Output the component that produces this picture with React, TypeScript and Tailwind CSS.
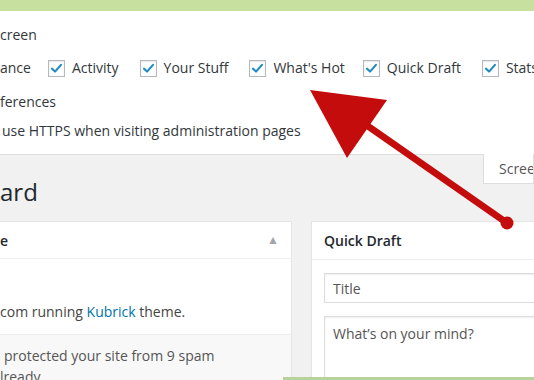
import React from 'react';

const Check = () => (
  <span className="inline-flex h-[17px] w-[17px] shrink-0 items-center justify-center border border-[#b4b9be] bg-white shadow-[inset_0_1px_2px_rgba(0,0,0,0.1)]">
    <svg width="13" height="13" viewBox="0 0 16 16">
      <path d="M2.5 8.2 L6.2 11.8 L13.5 3.5" fill="none" stroke="#1e8cbe" strokeWidth="2.6" strokeLinecap="round" strokeLinejoin="round" />
    </svg>
  </span>
);

const boxes = [
  { label: 'Activity', gap: 'ml-[17px]' },
  { label: 'Your Stuff', gap: 'ml-[21px]' },
  { label: "What's Hot", gap: 'ml-[21px]' },
  { label: 'Quick Draft', gap: 'ml-[18px]' },
  { label: 'Stats', gap: 'ml-[21px]' },
];

export default function App() {
  return (
    <div className="relative h-[380px] w-[534px] overflow-hidden bg-[#f1f1f1] font-['Open_Sans',sans-serif] text-[14px] text-[#32373c]">
      <div className="h-[11px] bg-[#c7df9f]" />

      {/* Screen options panel */}
      <div className="h-[144px] border-b border-[#dedede] bg-white">
        <div className="pt-[14px] leading-[20px]">creen</div>
        <div className="mt-[13px] flex items-center whitespace-nowrap leading-[20px]">
          <span>ance</span>
          {boxes.map((b) => (
            <label key={b.label} className={`${b.gap} flex items-center gap-[7px]`}>
              <Check />
              <span>{b.label}</span>
            </label>
          ))}
        </div>
        <div className="mt-[14px] leading-[20px]">ferences</div>
        <div className="mt-[9px] pl-[2px] leading-[20px]">use HTTPS when visiting administration pages</div>
      </div>

      {/* Screen options tab */}
      <div className="flex justify-end">
        <div className="-mt-px flex h-[30px] w-[51px] items-center overflow-hidden whitespace-nowrap border-x border-b border-[#dedede] bg-white pl-[15px] text-[14px] text-[#555]">
          Scree
        </div>
      </div>

      <h1 className="-mt-[9px] text-[24px] leading-[34px] font-normal text-[#23282d]">ard</h1>

      {/* Postboxes */}
      <div className="mt-[12px] flex gap-[19px]">
        <div className="w-[292px] shrink-0 border-t border-r border-[#e5e5e5] bg-white">
          <div className="flex h-[37px] items-center justify-between border-b border-[#eeeeee] pr-[12px] font-semibold text-[#23282d]">
            <span>e</span>
            <span className="text-[12px] text-[#a0a5aa]">▲</span>
          </div>
          <div className="h-[75px] pt-[43px] leading-[20px] text-[#444]">
            com running <span className="text-[#0073aa]">Kubrick</span> theme.
          </div>
          <div className="h-[60px] border-t border-[#eeeeee] bg-[#f8f8f8] pl-[4px] pt-[10px] leading-[21px] text-[#555]">
            <div>protected your site from 9 spam</div>
            <div className="-ml-[4px]">lready</div>
          </div>
        </div>
        <div className="w-[260px] shrink-0 border-t border-l border-[#e5e5e5] bg-white pl-[12px]">
          <div className="flex h-[37px] items-center font-semibold text-[#23282d]">Quick Draft</div>
          <div className="border-t border-[#eeeeee] -ml-[12px] pl-[12px] pt-[13px]">
            <div className="flex h-[30px] items-center border border-[#dddddd] pl-[8px] text-[#555] shadow-[inset_0_1px_2px_rgba(0,0,0,0.07)]">
              Title
            </div>
            <div className="mt-[13px] h-[80px] border border-[#dddddd] pl-[8px] pt-[6px] text-[#555] shadow-[inset_0_1px_2px_rgba(0,0,0,0.07)]">
              What’s on your mind?
            </div>
          </div>
        </div>
      </div>

      {/* bottom strip of next frame */}
      <div className="absolute bottom-0 left-[283px] h-[3px] w-[251px] bg-[#b5d39a]" />

      {/* red arrow overlay */}
      <svg className="pointer-events-none absolute left-0 top-0" width="534" height="380" viewBox="0 0 534 380">
        <line x1="362" y1="122" x2="507" y2="223" stroke="#c40c0c" strokeWidth="7" />
        <circle cx="507" cy="223" r="6.5" fill="#c40c0c" />
        <polygon points="310,90 387,100 347,158" fill="#c40c0c" />
      </svg>
    </div>
  );
}
